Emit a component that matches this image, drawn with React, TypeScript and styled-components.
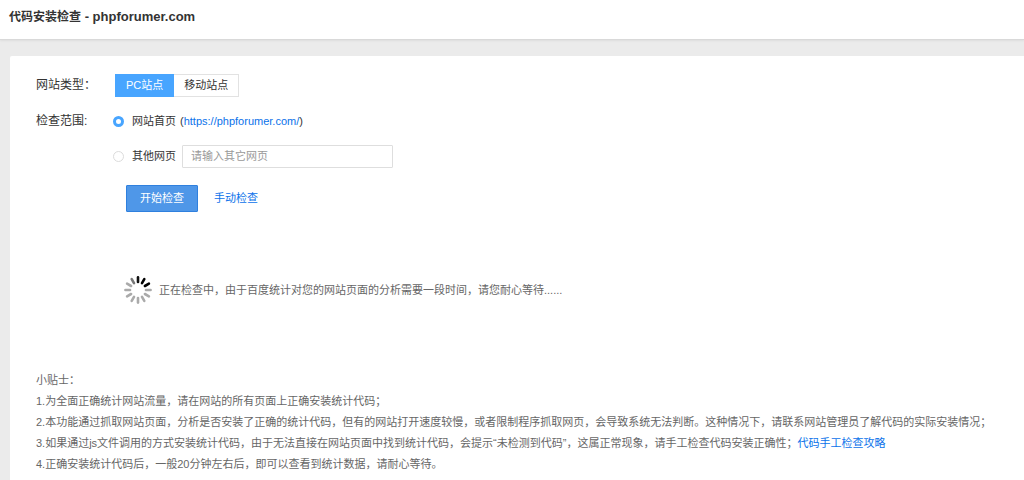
import React, { useState } from "react";
import styled, { createGlobalStyle } from "styled-components";

const GlobalStyle = createGlobalStyle`
  * { box-sizing: border-box; }
  html { background: #ebebeb; }
  body {
    margin: 0;
    color: #333;
    font: 11px/21px "Liberation Sans", "Noto Sans CJK SC", sans-serif;
  }
  #root { display: flex; flex-direction: column; min-height: 100vh; }
`;

const Header = styled.header`
  padding: 5px 9px 10px;
  background: #fff;
  border-bottom: 1px solid #d9d9d9;
  box-shadow: 0 1px 2px rgba(0, 0, 0, 0.06);
`;

const Title = styled.h1`
  margin: 0;
  font-size: 12px;
  line-height: 23px;
  font-weight: bold;
`;

const Domain = styled.span`
  font-size: 13px;
`;

const Panel = styled.main`
  flex: 1;
  margin: 16px 0 0 10px;
  padding: 18px 16px 4px 26px;
  background: #fff;
  border-radius: 2px 0 0 0;
`;

const Field = styled.div`
  display: grid;
  grid-template-columns: 77px 1fr;
  align-items: start;
  margin-bottom: 13px;
`;

const FieldLabel = styled.span`
  font-size: 12px;
  line-height: 23px;
  white-space: nowrap;
`;

const Segments = styled.div`
  display: flex;
  padding-left: 2px;
`;

const Segment = styled.button<{ $active: boolean }>`
  height: 23px;
  padding: 0 10px;
  font: inherit;
  line-height: 21px;
  cursor: pointer;
  color: ${(p) => (p.$active ? "#fff" : "#333")};
  background: ${(p) => (p.$active ? "#48a5ff" : "#fff")};
  border: 1px solid ${(p) => (p.$active ? "#48a5ff" : "#e2e2e2")};
  & + & { border-left: 0; }
`;

const Options = styled.div`
  display: flex;
  flex-direction: column;
  gap: 12px;
`;

const Option = styled.div`
  display: flex;
  align-items: center;
  height: 23px;
  line-height: 23px;
`;

const OptionLabel = styled.label`
  display: flex;
  align-items: center;
  gap: 8px;
`;

const Radio = styled.input`
  appearance: none;
  width: 11px;
  height: 11px;
  margin: 0;
  border: 1px solid #dcdcdc;
  border-radius: 50%;
  background: #fff;
  &:checked { border: 3px solid #48a5ff; }
`;

const Address = styled.span`
  margin-left: 4px;
`;

const Link = styled.a`
  color: #0b72ea;
  text-decoration: none;
`;

const PageInput = styled.input`
  width: 211px;
  height: 23px;
  margin-left: 6px;
  padding: 0 8px 1px;
  font: inherit;
  color: #333;
  border: 1px solid #dedede;
  border-radius: 1px;
  outline: 0;
  &::placeholder { color: #999; opacity: 1; }
`;

const Actions = styled.div`
  display: flex;
  align-items: center;
  gap: 16px;
  margin: 17px 0 0 90px;
`;

const StartButton = styled.button`
  height: 27px;
  padding: 0 13px;
  color: #fff;
  font: inherit;
  background: #4f97e8;
  border: 1px solid #2f80de;
  border-radius: 1px;
  cursor: pointer;
`;

const Status = styled.div`
  display: flex;
  align-items: center;
  gap: 7px;
  margin: 64px 0 66px 88px;
  color: #666;
`;

const Tips = styled.section`
  color: #666;
`;

const TipsTitle = styled.h2`
  margin: 0;
  font: inherit;
`;

const Tip = styled.p`
  margin: 0;
`;

const spokes = [
  "#777", "#111", "#000", "#000", "#aaa", "#aaa",
  "#aaa", "#aaa", "#aaa", "#aaa", "#aaa", "#aaa",
];

function Spinner() {
  return (
    <svg width="28" height="28" viewBox="-14 -14 28 28" aria-hidden="true">
      {spokes.map((color, i) => (
        <line
          key={i}
          y1="-8"
          y2="-12.6"
          stroke={color}
          strokeWidth="2.6"
          strokeLinecap="round"
          transform={`rotate(${(i - 1) * 30})`}
        />
      ))}
    </svg>
  );
}

export default function App() {
  const [site, setSite] = useState("pc");
  const [scope, setScope] = useState("home");

  return (
    <>
      <GlobalStyle />
      <Header>
        <Title>代码安装检查<Domain> - phpforumer.com</Domain></Title>
      </Header>
      <Panel>
        <Field role="group" aria-labelledby="site-type">
          <FieldLabel id="site-type">网站类型：</FieldLabel>
          <Segments>
            <Segment type="button" $active={site === "pc"} onClick={() => setSite("pc")}>PC站点</Segment>
            <Segment type="button" $active={site === "mobile"} onClick={() => setSite("mobile")}>移动站点</Segment>
          </Segments>
        </Field>
        <Field role="radiogroup" aria-labelledby="scope">
          <FieldLabel id="scope">检查范围:</FieldLabel>
          <Options>
            <Option>
              <OptionLabel>
                <Radio type="radio" name="scope" checked={scope === "home"} onChange={() => setScope("home")} />
                网站首页
              </OptionLabel>
              <Address>(<Link href="https://phpforumer.com/">https://phpforumer.com/</Link>)</Address>
            </Option>
            <Option>
              <OptionLabel>
                <Radio type="radio" name="scope" checked={scope === "other"} onChange={() => setScope("other")} />
                其他网页
              </OptionLabel>
              <PageInput type="text" aria-label="其他网页" placeholder="请输入其它网页" />
            </Option>
          </Options>
        </Field>
        <Actions>
          <StartButton type="button">开始检查</StartButton>
          <Link href="#manual">手动检查</Link>
        </Actions>
        <Status role="status">
          <Spinner />
          <span>正在检查中，由于百度统计对您的网站页面的分析需要一段时间，请您耐心等待......</span>
        </Status>
        <Tips>
          <TipsTitle>小贴士：</TipsTitle>
          <Tip>1.为全面正确统计网站流量，请在网站的所有页面上正确安装统计代码；</Tip>
          <Tip>2.本功能通过抓取网站页面，分析是否安装了正确的统计代码，但有的网站打开速度较慢，或者限制程序抓取网页，会导致系统无法判断。这种情况下，请联系网站管理员了解代码的实际安装情况；</Tip>
          <Tip>3.如果通过js文件调用的方式安装统计代码，由于无法直接在网站页面中找到统计代码，会提示“未检测到代码”，这属正常现象，请手工检查代码安装正确性；<Link href="#guide">代码手工检查攻略</Link></Tip>
          <Tip>4.正确安装统计代码后，一般20分钟左右后，即可以查看到统计数据，请耐心等待。</Tip>
        </Tips>
      </Panel>
    </>
  );
}
